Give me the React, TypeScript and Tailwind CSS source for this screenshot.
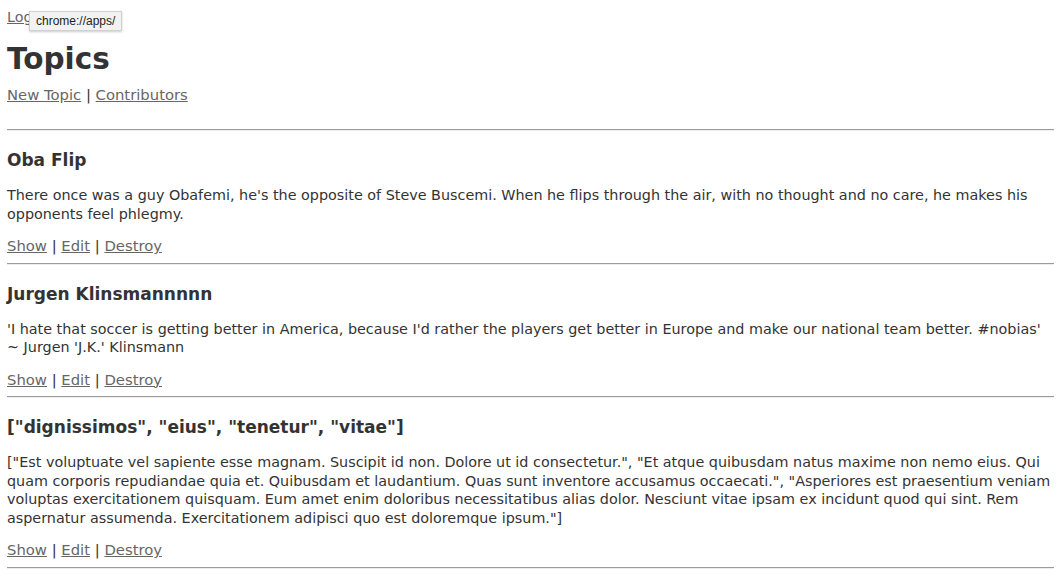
const topics = [
  {
    title: "Oba Flip",
    body: "There once was a guy Obafemi, he's the opposite of Steve Buscemi. When he flips through the air, with no thought and no care, he makes his opponents feel phlegmy.",
  },
  {
    title: "Jurgen Klinsmannnnn",
    body: "'I hate that soccer is getting better in America, because I'd rather the players get better in Europe and make our national team better. #nobias' ~ Jurgen 'J.K.' Klinsmann",
  },
  {
    title: '["dignissimos", "eius", "tenetur", "vitae"]',
    body: '["Est voluptuate vel sapiente esse magnam. Suscipit id non. Dolore ut id consectetur.", "Et atque quibusdam natus maxime non nemo eius. Qui quam corporis repudiandae quia et. Quibusdam et laudantium. Quas sunt inventore accusamus occaecati.", "Asperiores est praesentium veniam voluptas exercitationem quisquam. Eum amet enim doloribus necessitatibus alias dolor. Nesciunt vitae ipsam ex incidunt quod qui sint. Rem aspernatur assumenda. Exercitationem adipisci quo est doloremque ipsum."]',
  },
];

function Rule() {
  return <div className="border-t border-t-[#9b9b9b] border-b border-b-[#eeeeee]" />;
}

function TopicLink({ children }: { children: React.ReactNode }) {
  return (
    <a href="#" className="text-[#666] underline">
      {children}
    </a>
  );
}

export default function App() {
  return (
    <div className="relative min-h-[577px] bg-white text-[#333] text-[14.35px] leading-[18.5px] font-['DejaVu_Sans',Verdana,sans-serif] px-[7px] pt-[8px]">
      {/* header */}
      <div>
        <a href="#" className="text-[#666] underline">
          Log out
        </a>
      </div>
      <h1 className="mt-[15px] text-[29.5px] leading-[34px] font-bold">Topics</h1>
      <p className="mt-[10px] text-[14.8px]">
        <TopicLink>New Topic</TopicLink> | <TopicLink>Contributors</TopicLink>
      </p>

      <div className="mt-[25px]">
        <Rule />
      </div>

      {topics.map((t) => (
        <section key={t.title}>
          <h3 className="mt-[18px] text-[17px] leading-[22px] font-bold">{t.title}</h3>
          <p className="mt-[15px]">{t.body}</p>
          <p className="mt-[14px] text-[14.8px]">
            <TopicLink>Show</TopicLink> | <TopicLink>Edit</TopicLink> |{" "}
            <TopicLink>Destroy</TopicLink>
          </p>
          <div className="mt-[7px]">
            <Rule />
          </div>
        </section>
      ))}

      {/* link hover tooltip */}
      <div className="absolute left-[29px] top-[11px] h-[20px] px-[6px] flex items-center bg-[#f2f2f2] border border-[#d0d0d0] shadow-[0_1px_2px_rgba(0,0,0,0.2)] text-[12px] text-[#222] font-['Liberation_Sans',Arial,sans-serif]">
        chrome://apps/
      </div>
    </div>
  );
}
